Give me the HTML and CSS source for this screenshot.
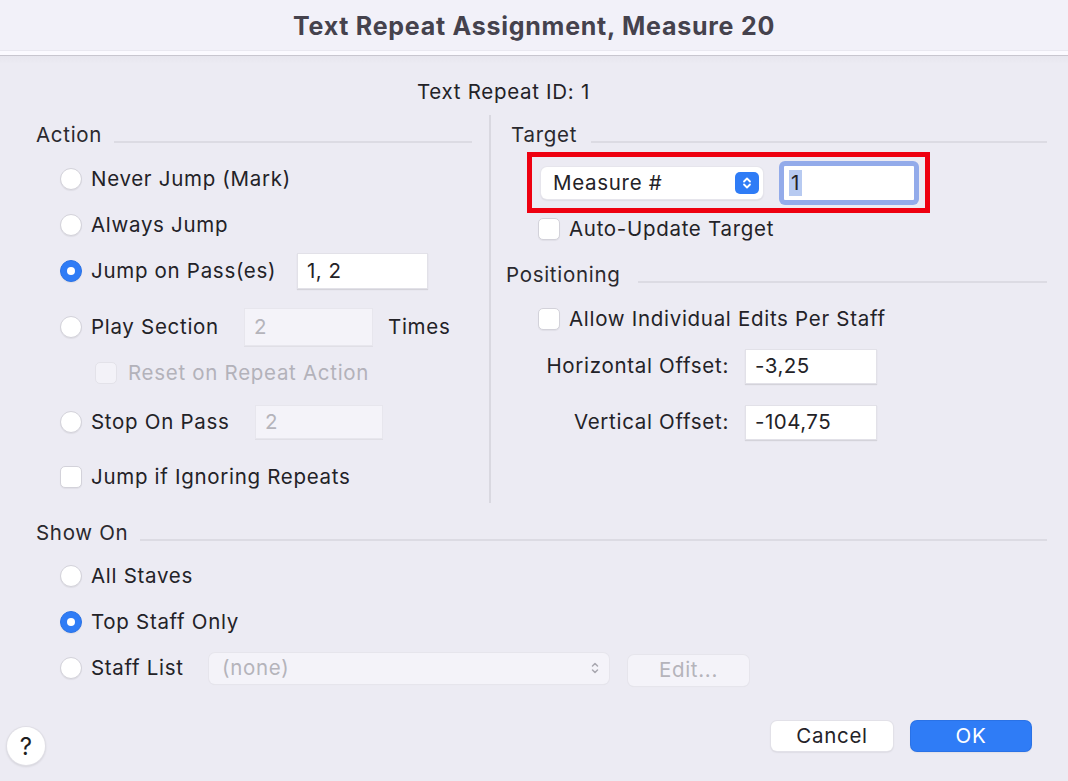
FILE: index.html
```html
<!DOCTYPE html>
<html>
<head>
<meta charset="utf-8">
<link rel="stylesheet" href="styles.css">
</head>
<body>
<div class="window">
  <header class="titlebar">Text Repeat Assignment, Measure 20</header>
  <div class="idrow">Text Repeat ID: 1</div>

  <div class="columns">
    <section class="left">
      <div class="sec-head"><span>Action</span><i class="rule"></i></div>
      <div class="row r1"><span class="radio"></span><span class="txt">Never Jump (Mark)</span></div>
      <div class="row r2"><span class="radio"></span><span class="txt">Always Jump</span></div>
      <div class="row r3"><span class="radio on"></span><span class="txt lbl-pass">Jump on Pass(es)</span><span class="field f-pass">1, 2</span></div>
      <div class="row r4"><span class="radio"></span><span class="txt lbl-play">Play Section</span><span class="field dis f-play">2</span><span class="txt times">Times</span></div>
      <div class="row r5 indent"><span class="check dis"></span><span class="txt distxt">Reset on Repeat Action</span></div>
      <div class="row r6"><span class="radio"></span><span class="txt lbl-stop">Stop On Pass</span><span class="field dis f-stop">2</span></div>
      <div class="row r7"><span class="check"></span><span class="txt">Jump if Ignoring Repeats</span></div>
    </section>

    <div class="vdivider"></div>

    <section class="right">
      <div class="sec-head target-head"><span>Target</span><i class="rule"></i></div>
      <div class="redbox">
        <div class="popup">
          <span>Measure #</span>
          <span class="stepper">
            <svg width="12" height="16" viewBox="0 0 12 16"><path d="M3 6.5 L6 3.5 L9 6.5 M3 9.5 L6 12.5 L9 9.5" fill="none" stroke="#fff" stroke-width="1.8" stroke-linecap="round" stroke-linejoin="round"/></svg>
          </span>
        </div>
        <div class="focusring"><span class="field focus"><span class="sel">1</span></span></div>
      </div>
      <div class="row rauto"><span class="check"></span><span class="txt">Auto-Update Target</span></div>

      <div class="sec-head pos-head"><span>Positioning</span><i class="rule"></i></div>
      <div class="row rallow"><span class="check"></span><span class="txt">Allow Individual Edits Per Staff</span></div>
      <div class="offrow hoff"><span class="offlbl">Horizontal Offset:</span><span class="field f-off">-3,25</span></div>
      <div class="offrow voff"><span class="offlbl">Vertical Offset:</span><span class="field f-off">-104,75</span></div>
    </section>
  </div>

  <section class="showon">
    <div class="sec-head"><span>Show On</span><i class="rule"></i></div>
    <div class="row s1"><span class="radio"></span><span class="txt">All Staves</span></div>
    <div class="row s2"><span class="radio on"></span><span class="txt">Top Staff Only</span></div>
    <div class="row s3"><span class="radio"></span><span class="txt lbl-list">Staff List</span>
      <span class="popup dis wide"><span>(none)</span>
        <svg width="10" height="16" viewBox="0 0 10 16"><path d="M2.5 6 L5 3.5 L7.5 6 M2.5 10 L5 12.5 L7.5 10" fill="none" stroke="#a9a8b0" stroke-width="1.5" stroke-linecap="round" stroke-linejoin="round"/></svg>
      </span>
      <span class="btn dis edit">Edit...</span>
    </div>
  </section>

  <footer class="footer">
    <span class="help">?</span>
    <span class="spacer"></span>
    <span class="btn cancel">Cancel</span>
    <span class="btn ok">OK</span>
  </footer>
</div>
</body>
</html>
```

FILE: styles.css
```css
* { box-sizing: border-box; }
html, body { margin: 0; padding: 0; }
body {
  width: 1068px;
  height: 781px;
  background: #ecebf3;
  font-family: Inter, "Noto Sans", sans-serif;
  font-size: 20.5px;
  letter-spacing: 0.7px;
  color: #232227;
  overflow: hidden;
}
.window { width: 1068px; height: 781px; position: relative; }

.titlebar {
  height: 56px;
  background: #f2f1f9;
  border-bottom: 1px solid #c8c6cf;
  box-shadow: inset 0 -4px 0 #fbfaff, inset 0 -5px 0 #e9e8f0;
  text-align: center;
  font-weight: 700;
  font-size: 25px;
  line-height: 52px;
  color: #45424d;
  letter-spacing: 0.75px;
}
.idrow {
  height: 59px;
  padding-top: 24px;
  padding-left: 417px;
  line-height: 24px;
  background: linear-gradient(#e7e6ee, #ecebf3 8px);
}

.columns { display: flex; height: 388px; }
.left { width: 472px; padding-left: 36px; padding-top: 5px; }
.vdivider { width: 2px; background: #d9d8e0; margin: 0 14px 0 17px; }
.right { flex: 1; padding-top: 5px; padding-right: 21px; }

.sec-head {
  height: 30px;
  display: flex;
  align-items: center;
  line-height: 24px;
  color: #2a292e;
}
.sec-head .rule {
  flex: 1;
  height: 2px;
  background: #dcdbe3;
  margin-left: 12px;
  margin-top: 14px;
}
.left .sec-head { margin-bottom: 6px; }
.target-head { padding-left: 6px; }
.target-head .rule { margin-left: 14px; }
.pos-head { margin-top: 15px; padding-left: 1px; }
.pos-head .rule { margin-left: 18px; }

.row { display: flex; align-items: center; padding-left: 24px; }
.row .txt { margin-left: 9px; line-height: 24px; white-space: nowrap; }
.r1 { height: 46px; }
.r2 { height: 45px; }
.r3 { height: 48px; }
.r4 { height: 64px; }
.r5 { height: 28px; }
.r6 { height: 70px; }
.r7 { height: 40px; }
.indent { padding-left: 59px; }
.r5 .txt { margin-left: 11px; }

.radio {
  width: 22px; height: 22px; flex: none;
  border-radius: 50%;
  background: #fff;
  border: 1px solid #d3d2da;
  box-shadow: 0 1px 1px rgba(0,0,0,0.06);
  position: relative;
}
.radio.on { background: #2f7cf6; border-color: #2a72e6; }
.radio.on::after {
  content: "";
  position: absolute;
  left: 6px; top: 6px;
  width: 8px; height: 8px;
  border-radius: 50%;
  background: #fff;
}
.check {
  width: 22px; height: 22px; flex: none;
  border-radius: 5px;
  background: #fff;
  border: 1px solid #d3d2da;
  box-shadow: 0 1px 1px rgba(0,0,0,0.05);
}
.check.dis { background: #f3f2f8; border-color: #e3e2e9; box-shadow: none; }
.distxt { color: #b3b2ba; }

.field {
  display: flex; align-items: center;
  height: 34px;
  background: #fff;
  padding-left: 9px;
  line-height: 24px;
  letter-spacing: 0.5px;
  box-shadow: 0 0 0 1px #e2e1e8, 0 1px 1px 1px rgba(0,0,0,0.10);
  flex: none;
}
.field.dis { background: #f4f3f9; color: #b5b4bb; box-shadow: 0 0 0 1px #e7e6ed, 0 1px 0 1px #e0dfe6; }
.lbl-pass { width: 207px; }
.lbl-play { width: 154px; }
.lbl-stop { width: 165px; }
.f-pass { width: 129px; }
.f-play { width: 127px; height: 36px; }
.f-stop { width: 126px; height: 32px; }
.times { margin-left: 16px !important; }

.redbox {
  margin-top: 2px;
  margin-left: 22px;
  width: 403px;
  height: 61px;
  border: 5px solid #ee0010;
  display: flex;
  align-items: center;
  padding-left: 9px;
}
.popup {
  display: flex; align-items: center; justify-content: space-between;
  width: 222px; height: 32px;
  background: #fff;
  border-radius: 6px;
  padding: 0 4px 0 12px;
  box-shadow: 0 0 0 1px #e6e5ec, 0 1px 2px rgba(0,0,0,0.18);
  line-height: 24px;
  flex: none;
}
.stepper {
  width: 24px; height: 22px;
  border-radius: 5px;
  background: #2f7cf6;
  display: flex; align-items: center; justify-content: center;
}
.focusring {
  margin-left: 16px;
  width: 140px; height: 44px;
  border-radius: 6px;
  background: #93abea;
  padding: 5px;
}
.field.focus { width: 130px; height: 34px; padding-left: 5px; box-shadow: none; border-radius: 1px; }
.sel { background: #b7caf1; padding: 0 2px; line-height: 26px; }

.rauto { height: 32px; padding-left: 33px; }
.rallow { height: 38px; margin-top: 10px; padding-left: 33px; }
.offrow { display: flex; align-items: center; height: 34px; }
.hoff { margin-top: 11px; }
.voff { margin-top: 22px; }
.offlbl { width: 224px; text-align: right; margin-right: 17px; line-height: 24px; white-space: nowrap; }
.f-off { width: 130px; height: 33px; }

.showon { padding: 15px 21px 0 36px; }
.showon .sec-head { margin-bottom: 5px; }
.s1, .s2, .s3 { height: 46px; }
.lbl-list { width: 118px; }
.popup.wide { width: 400px; height: 31px; background: #f4f3f9; color: #b5b4bb; padding: 0 9px 0 13px; box-shadow: 0 0 0 1px #e6e5ec, 0 1px 1px rgba(0,0,0,0.06); }
.btn {
  display: flex; align-items: center; justify-content: center;
  height: 30px;
  border-radius: 6px;
  background: #fff;
  line-height: 24px;
  box-shadow: 0 0 0 1px #e2e1e8, 0 1px 2px rgba(0,0,0,0.18);
  flex: none;
}
.btn.dis { background: #f4f3f9; color: #b5b4bb; box-shadow: 0 0 0 1px #e6e5ec, 0 1px 1px rgba(0,0,0,0.06); }
.edit { width: 121px; height: 31px; margin-left: 19px; margin-top: 4px; }

.footer {
  display: flex;
  align-items: flex-start;
  margin-top: 30px;
  padding: 0 37px 0 7px;
  height: 44px;
}
.spacer { flex: 1; }
.cancel { width: 122px; }
.ok { width: 120px; margin-left: 18px; background: #2f7cf6; color: #fff; box-shadow: 0 0 0 1px #2a72e6, 0 1px 2px rgba(0,0,0,0.15); }
.help {
  align-self: flex-end;
  width: 38px; height: 38px;
  border-radius: 50%;
  background: #fff;
  box-shadow: 0 0 0 1px #e0dfe6, 0 1px 3px rgba(0,0,0,0.2);
  display: flex; align-items: center; justify-content: center;
  font-size: 24px;
  letter-spacing: 0;
  color: #1d1d20;
}
```
